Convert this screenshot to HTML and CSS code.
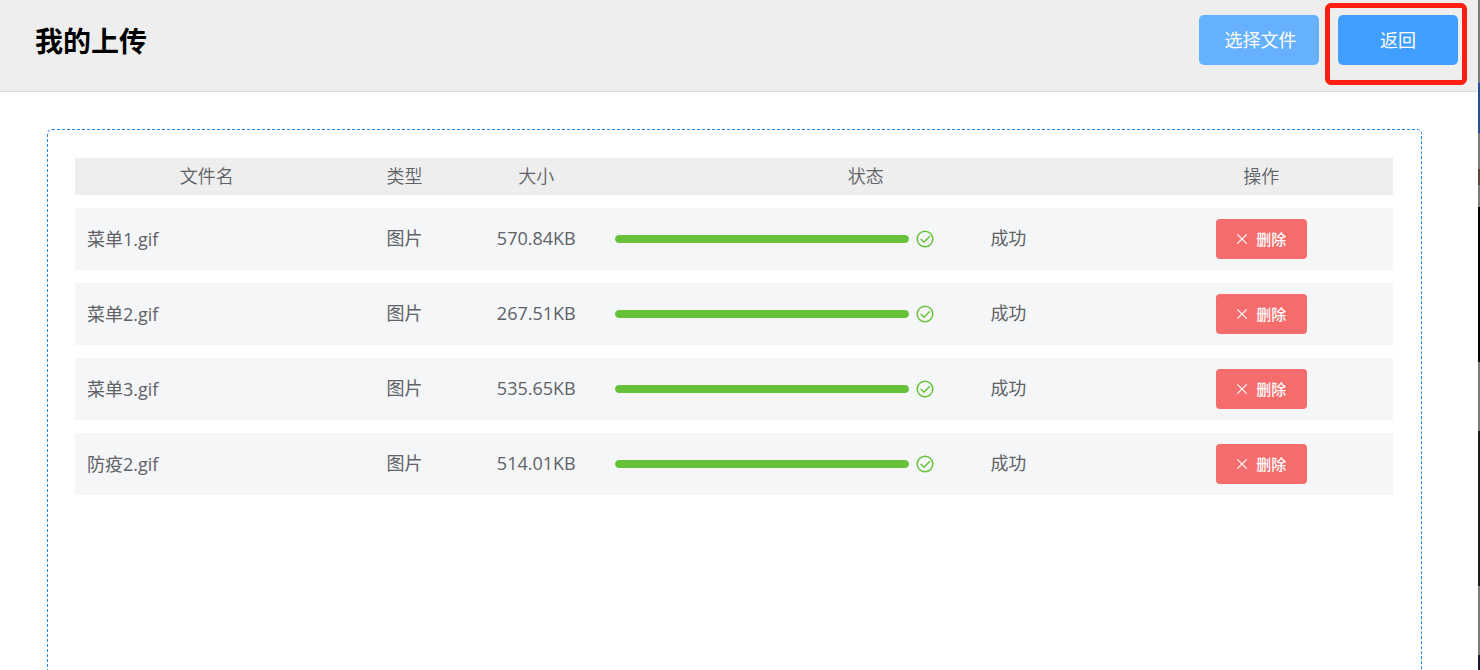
FILE: index.html
```
<!DOCTYPE html>
<html lang="zh-CN">
<head>
  <meta charset="utf-8">
  <title>我的上传</title>
  <link rel="stylesheet" href="styles.css">
</head>
<body>

  <!-- 图标 -->
  <svg class="sprite" aria-hidden="true">
    <symbol id="icon-check" viewBox="0 0 18 18">
      <circle cx="9" cy="9" r="7.8"/>
      <path d="M4.8 9l3.2 3.2 5.8-6"/>
    </symbol>
    <symbol id="icon-close" viewBox="0 0 12 12">
      <path d="M1.3 1.3l9.4 9.4M10.7 1.3l-9.4 9.4"/>
    </symbol>
  </svg>

  <div class="drawer">
    <header class="header">
      <h1 class="title">我的上传</h1>
      <div class="actions">
        <button type="button" class="btn btn-light">选择文件</button>
        <div class="marked">
          <button type="button" class="btn">返回</button>
        </div>
      </div>
    </header>

    <main class="content">
      <div class="drop">
        <table class="files">
          <thead>
            <tr>
              <th class="col-name">文件名</th>
              <th class="col-type">类型</th>
              <th class="col-size">大小</th>
              <th class="col-state">状态</th>
              <th class="col-op">操作</th>
            </tr>
          </thead>
          <tbody>
            <tr>
              <td class="name">菜单1.gif</td>
              <td class="info">图片</td>
              <td class="info">570.84KB</td>
              <td>
                <div class="state">
                  <progress class="bar" max="100" value="100" aria-label="菜单1.gif"></progress>
                  <svg class="check"><use href="#icon-check"/></svg>
                  <span class="state-text">成功</span>
                </div>
              </td>
              <td><button type="button" class="del"><svg class="close"><use href="#icon-close"/></svg>删除</button></td>
            </tr>
            <tr>
              <td class="name">菜单2.gif</td>
              <td class="info">图片</td>
              <td class="info">267.51KB</td>
              <td>
                <div class="state">
                  <progress class="bar" max="100" value="100" aria-label="菜单2.gif"></progress>
                  <svg class="check"><use href="#icon-check"/></svg>
                  <span class="state-text">成功</span>
                </div>
              </td>
              <td><button type="button" class="del"><svg class="close"><use href="#icon-close"/></svg>删除</button></td>
            </tr>
            <tr>
              <td class="name">菜单3.gif</td>
              <td class="info">图片</td>
              <td class="info">535.65KB</td>
              <td>
                <div class="state">
                  <progress class="bar" max="100" value="100" aria-label="菜单3.gif"></progress>
                  <svg class="check"><use href="#icon-check"/></svg>
                  <span class="state-text">成功</span>
                </div>
              </td>
              <td><button type="button" class="del"><svg class="close"><use href="#icon-close"/></svg>删除</button></td>
            </tr>
            <tr>
              <td class="name">防疫2.gif</td>
              <td class="info">图片</td>
              <td class="info">514.01KB</td>
              <td>
                <div class="state">
                  <progress class="bar" max="100" value="100" aria-label="防疫2.gif"></progress>
                  <svg class="check"><use href="#icon-check"/></svg>
                  <span class="state-text">成功</span>
                </div>
              </td>
              <td><button type="button" class="del"><svg class="close"><use href="#icon-close"/></svg>删除</button></td>
            </tr>
          </tbody>
        </table>
      </div>
    </main>
  </div>

</body>
</html>
```
FILE: styles.css
```
* {
  box-sizing: border-box;
}

/* 右侧露出的底层页面 */
body {
  margin: 0;
  height: 100vh;
  padding-right: 2px;
  overflow: hidden;
  background: linear-gradient(#7b7b7b 83px, #1d5192 83px, #1d5192 133px, #7b7b7b 133px, #7b7b7b 169px, #5b463f 169px, #5b463f 185px, #7b7b7b 185px, #7b7b7b 207px, #000 207px, #000 362px, #7b7b7b 362px, #7b7b7b 431px, #1c1c1c 431px, #1c1c1c 586px, #7b7b7b 586px, #7b7b7b 655px, #1a1a30 655px);
  font-family: "Open Sans", "Noto Sans CJK SC", sans-serif;
  font-size: 18px;
  line-height: 24px;
  color: #606266;
}

button {
  font-family: inherit;
  border: none;
  cursor: pointer;
}

.sprite {
  display: none;
}

.drawer {
  display: flex;
  flex-direction: column;
  height: 100%;
  background: #fff;
}

.header {
  display: flex;
  justify-content: space-between;
  align-items: flex-start;
  padding: 15px 20px 26px 35px;
  background: #eee;
  border-bottom: 1px solid #dcdcdc;
}

.title {
  margin: 6px 0 0;
  font-size: 28px;
  line-height: 40px;
  color: #000;
}

.actions {
  display: flex;
  gap: 19px;
}

.btn {
  display: block;
  width: 120px;
  height: 50px;
  padding: 0 0 2px;
  border-radius: 5px;
  background: #409eff;
  color: #fff;
  font-size: 18px;
}

.btn-light {
  padding-left: 3px;
  background: #66b1ff;
}

/* 红色标注框 */
.marked {
  position: relative;
}

.marked::after {
  content: "";
  position: absolute;
  top: -12px;
  right: -9px;
  bottom: -20px;
  left: -13px;
  border: 5px solid #ff1e10;
  border-radius: 6px;
  pointer-events: none;
}

.content {
  flex: 1;
  min-height: 0;
  padding: 37px 56px 0 47px;
  overflow: hidden;
}

.drop {
  min-height: 800px;
  padding: 15px 28px 28px 27px;
  border: 1px dashed #1e88f0;
  border-radius: 5px;
}

.files {
  width: 100%;
  table-layout: fixed;
  border-collapse: separate;
  border-spacing: 0 13px;
  text-align: center;
}

.files th {
  height: 37px;
  padding: 0 0 2px;
  background: #eee;
  font-weight: 350;
}

.files td {
  height: 62px;
  padding: 0;
  background: #f4f6f8;
}

.files .name {
  padding-left: 12px;
  text-align: left;
}

.files .info {
  padding-bottom: 2px;
}

.col-name,
.col-op {
  width: 20%;
}

.col-type,
.col-size {
  width: 10%;
}

.col-state {
  width: 40%;
}

.state {
  display: flex;
  align-items: center;
  padding: 0 13px;
}

.bar {
  flex: 1;
  min-width: 0;
  height: 8px;
  appearance: none;
  border: none;
  border-radius: 4px;
  overflow: hidden;
}

.bar::-webkit-progress-bar {
  background: #ebeef5;
}

.bar::-webkit-progress-value {
  background: #67c23a;
  border-radius: 4px;
}

.bar::-moz-progress-bar {
  background: #67c23a;
}

.check {
  width: 18px;
  height: 18px;
  margin: 0 56px 0 7px;
  fill: none;
  stroke: #67c23a;
  stroke-width: 1.5;
}

.state-text {
  width: 126px;
  padding-bottom: 2px;
  text-align: left;
}

.del {
  display: inline-flex;
  align-items: center;
  justify-content: center;
  gap: 8px;
  width: 91px;
  height: 40px;
  padding: 0 0 1px;
  border-radius: 4px;
  background: #f56c6c;
  color: #fff;
  font-size: 15px;
  font-weight: 500;
  vertical-align: middle;
}

.close {
  width: 12px;
  height: 12px;
  fill: none;
  stroke: #fff;
  stroke-width: 1.2;
}
```
